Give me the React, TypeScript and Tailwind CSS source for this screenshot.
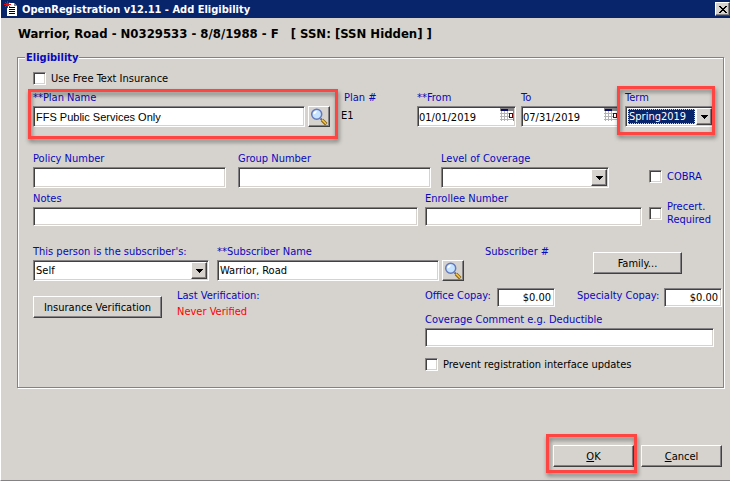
import type { ReactNode } from "react";

const sunken =
  "border border-[#848284] border-r-white border-b-white bg-white shadow-[inset_1px_1px_0_#424142,inset_-1px_-1px_0_#d6d3ce]";
const raised =
  "border border-white border-r-[#424142] border-b-[#424142] bg-[#d6d3ce] shadow-[inset_-1px_-1px_0_#848284]";

const Label = ({ id, children }: { id: string; children: ReactNode }) => (
  <label htmlFor={id} className="block pt-px mb-[2px] whitespace-nowrap text-[#0808bd]">{children}</label>
);

type TextProps = { id: string; label: string; value?: string; className?: string; inputClass?: string };

const TextField = ({ id, label, value = "", className = "", inputClass = "h-[21px]" }: TextProps) => (
  <div className={`min-w-0 ${className}`}>
    <Label id={id}>{label}</Label>
    <input id={id} type="text" defaultValue={value} className={`block w-full px-[2px] outline-none ${sunken} ${inputClass}`} />
  </div>
);

const Calendar = () => (
  <svg className="w-[14px] h-[13px] shrink-0" viewBox="0 0 14 13">
    <path fill="#fff" d="M0 0h14v13H0z" />
    <path fill="#b5b2b5" d="M0 5h14v1H0zM0 8h14v1H0zM0 11h14v1H0zM1 3h1v10H1zM4 3h1v10H4zM7 3h1v10H7z" />
    <path fill="#848284" d="M0 0h14v3H0zM13 0h1v13h-1z" />
    <path fill="#08086b" d="M1 1h7v2H1z" />
    <path fill="#6b0000" d="M9 5h4v5H9z" />
    <path fill="#fff" d="M10 6h2v3h-2z" />
  </svg>
);

const DateField = ({ id, label, value }: TextProps) => (
  <div className="w-[99px]">
    <Label id={id}>{label}</Label>
    <div className={`flex h-[21px] pl-px pr-px pt-px ${sunken}`}>
      <input id={id} type="text" defaultValue={value} className="min-w-0 flex-1 outline-none" />
      <Calendar />
    </div>
  </div>
);

type SelectProps = { id: string; label: string; value?: string; className?: string; focused?: boolean };

const SelectField = ({ id, label, value = "", className = "", focused }: SelectProps) => (
  <div className={className}>
    <Label id={id}>{label}</Label>
    <div className={`flex h-[21px] p-px ${sunken}`}>
      <select
        id={id}
        className={`appearance-none min-w-0 flex-1 outline-none ${
          focused ? "m-px border border-dotted border-[#d6d3a5] bg-[#08246b] text-white" : "pl-px"
        }`}
      >
        <option>{value}</option>
      </select>
      <span className={`flex w-4 items-center justify-center ${raised}`}>
        <svg className="w-[7px] h-1" viewBox="0 0 7 4" shapeRendering="crispEdges">
          <path d="M0 0h7v1H0zM1 1h5v1H1zM2 2h3v1H2zM3 3h1v1H3z" />
        </svg>
      </span>
    </div>
  </div>
);

const Check = ({ id, label, blue }: { id: string; label: ReactNode; blue?: boolean }) => (
  <div className="flex items-center gap-[5px]">
    <input id={id} type="checkbox" className={`appearance-none size-[13px] shrink-0 ${sunken}`} />
    <label htmlFor={id} className={blue ? "text-[#0808bd]" : ""}>{label}</label>
  </div>
);

const SearchButton = ({ label }: { label: string }) => (
  <button type="button" aria-label={label} className={`flex h-[21px] w-[22px] shrink-0 items-center justify-center self-end ${raised}`}>
    <svg className="size-[18px]" viewBox="0 0 18 18">
      <path d="M10.5 10.5l2 2" stroke="#6b6984" strokeWidth="2" />
      <path d="M12 12l4.3 4.3" stroke="#8c6518" strokeWidth="3.4" />
      <path d="M12 11.7l4 4" stroke="#f7ca4a" strokeWidth="1.5" />
      <circle cx="6.7" cy="6.3" r="5" fill="#c6e3ff" stroke="#6379bd" strokeWidth="1.5" />
      <path d="M3.3 6.4a3.5 3.5 0 0 1 3.6-3.3c-.4 2-1.5 3.2-3.6 3.3z" fill="#fff" />
    </svg>
  </button>
);

const Button = ({ className = "", children }: { className?: string; children: ReactNode }) => (
  <button type="button" className={`h-[22px] whitespace-nowrap ${raised} ${className}`}>{children}</button>
);

// red call-out frame laid over the controls it surrounds
const Highlight = ({ className }: { className: string }) => (
  <div className={`pointer-events-none absolute border-3 border-[#ff4542] drop-shadow-[1px_3px_2px_rgba(0,0,0,0.45)] ${className}`} />
);

const MoneyField = ({ id, label }: TextProps) => (
  <div className="flex">
    <label htmlFor={id} className="w-full pt-px whitespace-nowrap text-[#0808bd]">{label}</label>
    <input id={id} type="text" defaultValue="$0.00" className={`h-[19px] w-[58px] shrink-0 px-[3px] text-right outline-none ${sunken}`} />
  </div>
);

const App = () => {
  return (
    <div className="flex min-h-screen flex-col border-b border-l border-b-[#848284] border-l-white bg-[#d6d3ce] font-['DejaVu_Sans_Condensed','DejaVu_Sans',sans-serif] text-[11px] leading-[13px] text-black">
      <header className="flex h-[18px] items-center bg-[#08246b] pl-[3px] text-white">
        <svg className="size-4 shrink-0" viewBox="0 0 16 16" shapeRendering="crispEdges">
          <path fill="#fff" d="M3 2h7l3 3v10H3z" />
          <path fill="#848284" d="M10 2l3 3h-3z" />
          <path fill="#000" d="M5 6h6v1H5zM5 8h6v1H5zM5 10h6v1H5zM5 12h6v1H5z" />
          <path fill="#e70808" d="M3 0h1v7H3zM0 3h7v1H0zM1 1h1v1H1zM2 2h1v1H2zM5 1h1v1H5zM4 2h1v1H4zM2 4h1v1H2zM1 5h1v1H1zM4 4h1v1H4zM5 5h1v1H5z" />
        </svg>
        <h1 className="flex-1 pl-[2px] font-bold">OpenRegistration v12.11 - Add Eligibility</h1>
        <button type="button" aria-label="Close" className={`flex h-[14px] w-[15px] items-center justify-center ${raised}`}>
          <svg className="w-2 h-[7px]" viewBox="0 0 8 7" shapeRendering="crispEdges">
            <path d="M0 0h2v1H0zM6 0h2v1H6zM1 1h2v1H1zM5 1h2v1H5zM2 2h4v1H2zM3 3h2v1H3zM2 4h4v1H2zM1 5h2v1H1zM5 5h2v1H5zM0 6h2v1H0zM6 6h2v1H6z" />
          </svg>
        </button>
      </header>

      <main className="pl-4 pr-[6px]">
        <h2 className="flex gap-3 pt-2 pl-px text-[13px] leading-4 font-bold">
          <span>Warrior, Road - N0329533 - 8/8/1988 - F</span>
          <span>[ SSN: [SSN Hidden] ]</span>
        </h2>

        <fieldset className="mt-[9px] border border-[#848284] pb-4 pl-[15px] pr-px shadow-[inset_1px_1px_0_#fff,1px_1px_0_#fff]">
          <legend className="-ml-2 bg-[#d6d3ce] px-px font-bold text-[#0808bd]">Eligibility</legend>

          <div className="pt-2">
            <Check id="freeText" label="Use Free Text Insurance" />
          </div>

          <div className="mt-[5px] flex pr-2">
            <div className="relative z-10 flex flex-1 gap-[3px]">
              <TextField id="plan" label="**Plan Name" value="FFS Public Services Only" className="flex-1" inputClass="h-[21px] font-['Liberation_Sans',sans-serif]" />
              <SearchButton label="Search plans" />
              <Highlight className="-left-[5px] -right-2 -top-px -bottom-3" />
            </div>
            <dl className="w-[87px] pl-[11px]">
              <dt className="pt-px pl-[3px] text-[#0808bd]">Plan #</dt>
              <dd className="pt-[5px]">E1</dd>
            </dl>
            <div className="flex gap-[5px]">
              <DateField id="from" label="**From" value="01/01/2019" />
              <DateField id="to" label="To" value="07/31/2019" />
              <div className="relative">
                <SelectField id="term" label="Term" value="Spring2019" className="w-[89px]" focused />
                <Highlight className="-left-2 -right-px -top-1 -bottom-2" />
              </div>
            </div>
          </div>

          <div className="mt-6 flex">
            <TextField id="policy" label="Policy Number" className="mr-3 flex-1" />
            <TextField id="group" label="Group Number" className="mr-[10px] flex-1" />
            <SelectField id="level" label="Level of Coverage" className="w-42" />
            <div className="ml-10 w-[73px] self-end pb-[5px]">
              <Check id="cobra" label="COBRA" blue />
            </div>
          </div>

          <div className="mt-[3px] flex gap-[7px]">
            <TextField id="notes" label="Notes" className="flex-1" inputClass="h-[19px]" />
            <TextField id="enrollee" label="Enrollee Number" className="w-[217px]" inputClass="h-[19px]" />
            <div className="w-[73px] self-end">
              <Check id="precert" label={<>Precert.<br />Required</>} blue />
            </div>
          </div>

          <div className="mt-[18px] flex pr-10">
            <SelectField id="relation" label="This person is the subscriber's:" value="Self" className="mr-2 w-44" />
            <TextField id="subscriber" label="**Subscriber Name" value="Warrior, Road" className="mr-[3px] flex-1" />
            <SearchButton label="Search subscribers" />
            <span className="w-[129px] pt-px pl-[21px] text-[#0808bd]">Subscriber #</span>
            <Button className="mt-2 w-[89px]">Family...</Button>
          </div>

          <div className="mt-[7px] flex">
            <div className="flex flex-1">
              <Button className="mt-2 mr-[15px] w-[129px]">Insurance Verification</Button>
              <p className="leading-4 text-[#0808bd]">
                Last Verification:
                <br />
                <span className="text-[#ff0000]">Never Verified</span>
              </p>
            </div>
            <div className="w-[297px]">
              <div className="flex justify-between gap-[22px]">
                <div className="w-[130px]"><MoneyField id="office" label="Office Copay:" /></div>
                <div className="flex-1"><MoneyField id="specialty" label="Specialty Copay:" /></div>
              </div>
              <TextField id="comment" label="Coverage Comment e.g. Deductible" className="mt-[5px] mr-2" inputClass="h-[19px]" />
              <div className="mt-[11px]">
                <Check id="prevent" label="Prevent registration interface updates" />
              </div>
            </div>
          </div>
        </fieldset>

        <div className="mt-[57px] mb-3 flex justify-end gap-[7px] pr-[2px]">
          <div className="relative">
            <Button className="w-[81px]"><u>O</u>K</Button>
            <Highlight className="-left-[7px] -right-[3px] -top-[11px] -bottom-[6px]" />
          </div>
          <Button className="w-[81px]"><u>C</u>ancel</Button>
        </div>
      </main>
    </div>
  );
};

export default App;
